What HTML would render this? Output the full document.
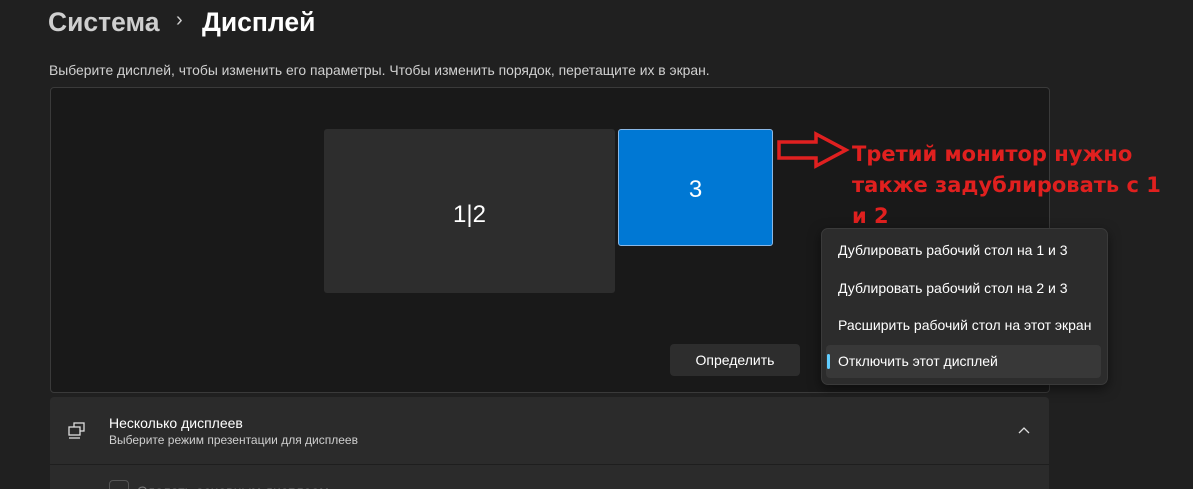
<!DOCTYPE html>
<html><head><meta charset="utf-8"><style>
html,body{margin:0;width:1193px;height:489px;overflow:hidden}
body{background:#202020;position:relative;font-family:"Liberation Sans","DejaVu Sans",sans-serif;color:#fff}
.a{position:absolute;white-space:nowrap}
</style></head><body>
<div class="a" style="left:48px;top:7px;font-size:26.5px;color:#cfcfcf;font-weight:bold">Система</div>
<div class="a" style="left:176px;top:9px;font-size:20px;color:#cfcfcf">›</div>
<div class="a" style="left:202px;top:7px;font-size:26.5px;color:#fff;font-weight:bold">Дисплей</div>
<div class="a" style="left:49px;top:62px;font-size:13.9px;color:#d0d0d0">Выберите дисплей, чтобы изменить его параметры. Чтобы изменить порядок, перетащите их в экран.</div>
<div class="a" style="left:50px;top:87px;width:998px;height:304px;background:#191919;border:1px solid #3a3a3a;border-radius:4px"></div>
<div class="a" style="left:324px;top:129px;width:291px;height:164px;background:#2d2d2d;border-radius:3px;text-align:center;line-height:172px;font-size:24px">1|2</div>
<div class="a" style="left:618px;top:129px;width:153px;height:115px;background:#0078d4;border:1px solid #8ab8e6;border-radius:3px;text-align:center;line-height:120px;font-size:24px">3</div>
<svg class="a" style="left:776px;top:130px" width="76" height="40"><path d="M3 12 H40 V4 L70 20 L40 36 V28 H3 Z" fill="none" stroke="#e02020" stroke-width="3.5"/></svg>
<div class="a" style="left:852px;top:139px;font-size:21px;line-height:31px;color:#e0201f;font-weight:bold;font-family:'DejaVu Sans',sans-serif">Третий монитор нужно<br>также задублировать с 1<br>и 2</div>
<div class="a" style="left:670px;top:344px;width:130px;height:32px;background:#2d2d2d;border-radius:4px;text-align:center;line-height:32px;font-size:14px">Определить</div>
<div class="a" style="left:821px;top:228px;width:285px;height:155px;background:#2c2c2c;border:1px solid #3a3a3a;border-radius:7px;box-shadow:0 4px 12px rgba(0,0,0,.5)"></div>
<div class="a" style="left:838px;top:242px;font-size:14px">Дублировать рабочий стол на 1 и 3</div>
<div class="a" style="left:838px;top:280px;font-size:14px">Дублировать рабочий стол на 2 и 3</div>
<div class="a" style="left:838px;top:317px;font-size:14px">Расширить рабочий стол на этот экран</div>
<div class="a" style="left:826px;top:345px;width:275px;height:33px;background:#383838;border-radius:4px"></div>
<div class="a" style="left:827px;top:354px;width:3px;height:15px;background:#60cdff;border-radius:2px"></div>
<div class="a" style="left:838px;top:353px;font-size:14px">Отключить этот дисплей</div>
<div class="a" style="left:50px;top:397px;width:999px;height:92px;background:#2b2b2b;border-radius:4px 4px 0 0"></div>
<div class="a" style="left:50px;top:464px;width:999px;height:1px;background:#1e1e1e"></div>
<svg class="a" style="left:66px;top:421px" width="22" height="20"><rect x="8" y="2" width="10" height="8" fill="none" stroke="#ddd" stroke-width="1.3"/><rect x="3" y="6" width="11" height="8" fill="#2b2b2b" stroke="#ddd" stroke-width="1.3"/><path d="M3 17 H14" stroke="#ddd" stroke-width="1.3"/></svg>
<div class="a" style="left:109px;top:415px;font-size:14px">Несколько дисплеев</div>
<div class="a" style="left:109px;top:433px;font-size:12px;color:#cfcfcf">Выберите режим презентации для дисплеев</div>
<svg class="a" style="left:1017px;top:426px" width="14" height="10"><path d="M2 7 L7 2 L12 7" fill="none" stroke="#ddd" stroke-width="1.3"/></svg>
<div class="a" style="left:109px;top:480px;width:18px;height:18px;border:1px solid #555;border-radius:4px"></div>
<div class="a" style="left:137px;top:483px;font-size:14px;color:#777">Сделать основным дисплеем</div>
</body></html>
